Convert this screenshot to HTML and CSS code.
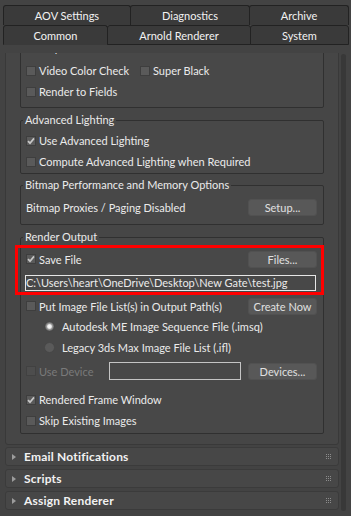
FILE: index.html
```html
<!DOCTYPE html>
<html lang="en">
<head>
    <meta charset="UTF-8">
    <title>Render Setup - Common</title>
    <link rel="stylesheet" href="styles.css">
</head>
<body>
    <div class="tabs">
        <div class="tab-row back">
            <div class="tab tab-aov">AOV Settings</div>
            <div class="tab tab-diag">Diagnostics</div>
            <div class="tab tab-archive">Archive</div>
        </div>
        <div class="tab-row front">
            <div class="tab tab-common active">Common</div>
            <div class="tab tab-arnold">Arnold Renderer</div>
            <div class="tab tab-system">System</div>
        </div>
    </div>

    <div class="main">
        <div class="viewport">
            <div class="rollout scrolled">
                <fieldset class="group group-options">
                    <legend>Options</legend>
                    <div class="row row-top">
                        <label class="check col"><span class="box"></span>Displacement</label>
                        <label class="check"><span class="box"></span>Force 2-Sided</label>
                    </div>
                    <div class="row">
                        <label class="check col"><span class="box"></span>Video Color Check</label>
                        <label class="check"><span class="box"></span>Super Black</label>
                    </div>
                    <div class="row">
                        <label class="check"><span class="box"></span>Render to Fields</label>
                    </div>
                </fieldset>

                <fieldset class="group group-lighting">
                    <legend>Advanced Lighting</legend>
                    <div class="row">
                        <label class="check"><span class="box checked"><svg viewBox="0 0 8 8"><path d="M1 4.2 3 6.2 7 1.4"/></svg></span>Use Advanced Lighting</label>
                    </div>
                    <div class="row">
                        <label class="check"><span class="box"></span>Compute Advanced Lighting when Required</label>
                    </div>
                </fieldset>

                <fieldset class="group group-bitmap">
                    <legend>Bitmap Performance and Memory Options</legend>
                    <div class="row row-button">
                        <span class="plain">Bitmap Proxies / Paging Disabled</span>
                        <div class="btn">Setup...</div>
                    </div>
                </fieldset>

                <fieldset class="group group-output">
                    <legend>Render Output</legend>
                    <div class="save-block">
                        <div class="row row-save">
                            <label class="check"><span class="box checked"><svg viewBox="0 0 8 8"><path d="M1 4.2 3 6.2 7 1.4"/></svg></span>Save File</label>
                            <div class="btn">Files...</div>
                        </div>
                        <div class="path-field">C:\Users\heart\OneDrive\Desktop\New Gate\test.jpg</div>
                        <div class="annotation"></div>
                    </div>
                    <div class="row row-put">
                        <label class="check"><span class="box"></span>Put Image File List(s) in Output Path(s)</label>
                        <div class="btn">Create Now</div>
                    </div>
                    <div class="row radio-row">
                        <span class="radio on"></span>Autodesk ME Image Sequence File (.imsq)
                    </div>
                    <div class="row radio-row">
                        <span class="radio"></span>Legacy 3ds Max Image File List (.ifl)
                    </div>
                    <div class="row row-device">
                        <label class="check disabled device-label"><span class="box"></span>Use Device</label>
                        <div class="device-field"></div>
                        <div class="btn">Devices...</div>
                    </div>
                    <div class="row row-frame">
                        <label class="check"><span class="box checked"><svg viewBox="0 0 8 8"><path d="M1 4.2 3 6.2 7 1.4"/></svg></span>Rendered Frame Window</label>
                    </div>
                    <div class="row">
                        <label class="check"><span class="box"></span>Skip Existing Images</label>
                    </div>
                </fieldset>
            </div>

            <div class="rollout-head">
                <span class="arrow"></span>Email Notifications
                <svg class="grip" viewBox="0 0 5 5"><rect x="0" y="0" width="1" height="1"/><rect x="2" y="0" width="1" height="1"/><rect x="4" y="0" width="1" height="1"/><rect x="0" y="2" width="1" height="1"/><rect x="2" y="2" width="1" height="1"/><rect x="4" y="2" width="1" height="1"/><rect x="0" y="4" width="1" height="1"/><rect x="2" y="4" width="1" height="1"/><rect x="4" y="4" width="1" height="1"/></svg>
            </div>
            <div class="rollout-head">
                <span class="arrow"></span>Scripts
                <svg class="grip" viewBox="0 0 5 5"><rect x="0" y="0" width="1" height="1"/><rect x="2" y="0" width="1" height="1"/><rect x="4" y="0" width="1" height="1"/><rect x="0" y="2" width="1" height="1"/><rect x="2" y="2" width="1" height="1"/><rect x="4" y="2" width="1" height="1"/><rect x="0" y="4" width="1" height="1"/><rect x="2" y="4" width="1" height="1"/><rect x="4" y="4" width="1" height="1"/></svg>
            </div>
            <div class="rollout-head">
                <span class="arrow"></span>Assign Renderer
                <svg class="grip" viewBox="0 0 5 5"><rect x="0" y="0" width="1" height="1"/><rect x="2" y="0" width="1" height="1"/><rect x="4" y="0" width="1" height="1"/><rect x="0" y="2" width="1" height="1"/><rect x="2" y="2" width="1" height="1"/><rect x="4" y="2" width="1" height="1"/><rect x="0" y="4" width="1" height="1"/><rect x="2" y="4" width="1" height="1"/><rect x="4" y="4" width="1" height="1"/></svg>
            </div>
        </div>
        <div class="scrollbar"></div>
    </div>
</body>
</html>
```

FILE: styles.css
```css
* {
    box-sizing: border-box;
}
body {
    margin: 0;
    width: 351px;
    height: 516px;
    overflow: hidden;
    background-color: #434343;
    font-family: Lato, "Liberation Sans", sans-serif;
    font-size: 11px;
    color: #ebebeb;
}

/* tabs */
.tabs {
    height: 45px;
    padding: 5px 0 0 3px;
}
.tab-row {
    display: flex;
    height: 20px;
}
.tab {
    height: 20px;
    display: flex;
    align-items: center;
    justify-content: center;
    background-color: #3a3a3a;
    border: 1px solid #222;
    border-radius: 3px 3px 0 0;
    margin-right: -1px;
    color: #f2f2f2;
}
.back .tab {
    border-bottom: none;
}
.tab.active {
    border-bottom-color: transparent;
}
.tab-aov { width: 128px; }
.tab-diag { width: 120px; }
.tab-archive { width: 100px; }
.tab-common { width: 105px; }
.tab-arnold { width: 144px; }
.tab-system { width: 99px; }

/* scroll area */
.main {
    display: flex;
    margin-top: 8px;
    height: 463px;
}
.viewport {
    width: 339px;
    height: 463px;
    padding-left: 5px;
    overflow: hidden;
}
.scrollbar {
    width: 5px;
    height: 457px;
    margin: 1px 0 0 2px;
    background-color: #383838;
    border-radius: 3px;
}
.rollout {
    width: 334px;
    background-color: #464646;
    border: 1px solid #393939;
    border-radius: 3px;
    padding: 6px 14px 10px;
}
.scrolled {
    margin-top: -38px;
}

/* group boxes */
.group {
    margin: 0;
    min-width: 0;
    padding: 3px 6px 0 5px;
    border: 1px solid #303030;
    border-radius: 2px;
    background-color: #484848;
}
.group legend {
    margin-left: -3px;
    padding: 0 2px;
    line-height: 14px;
}
.group-options { padding-bottom: 5px; }
.group-lighting { margin-top: 5px; padding-bottom: 1px; }
.group-bitmap { margin-top: 4px; padding-bottom: 7px; }
.group-output { margin-top: 5px; padding-bottom: 2px; }

.row {
    display: flex;
    align-items: center;
    height: 21px;
    white-space: nowrap;
}
.row-top {
    align-items: flex-start;
    padding-top: 2px;
}
.check {
    display: flex;
    align-items: center;
    gap: 3px;
}
.col {
    width: 114px;
}
.box {
    flex: none;
    width: 10px;
    height: 10px;
    display: flex;
    align-items: center;
    justify-content: center;
    background-color: #5a5a5a;
    border: 1px solid #3e3e3e;
}
.box svg {
    width: 8px;
    height: 8px;
}
.box path {
    fill: none;
    stroke: #c8c8c8;
    stroke-width: 1.7;
}
.check.disabled {
    color: #7a7a7a;
}
.check.disabled .box {
    background-color: #4d4d4d;
    border-color: #414141;
}

.btn {
    margin-left: auto;
    flex: none;
    width: 69px;
    height: 17px;
    display: flex;
    align-items: center;
    justify-content: center;
    background-color: #585858;
    border: 1px solid #515151;
    border-radius: 3px;
    color: #e0e0e0;
}
.row-button {
    height: 19px;
    margin-top: 3px;
}

/* render output */
.save-block {
    position: relative;
    margin-top: 2px;
}
.row-save {
    height: 20px;
}
.path-field {
    height: 16px;
    margin: 6px 1px 0 -1px;
    border: 1px solid #e6e6e6;
    line-height: 14px;
    white-space: nowrap;
    overflow: hidden;
}
.annotation {
    position: absolute;
    top: -4px;
    left: -11px;
    right: -7px;
    bottom: -4px;
    border: 3px solid #ff0000;
}
.row-put {
    height: 20px;
    margin-top: 5px;
}
.radio-row {
    padding-left: 18px;
    gap: 7px;
}
.radio {
    flex: none;
    width: 11px;
    height: 11px;
    border-radius: 50%;
    background-color: #5a5a5a;
    border: 1px solid #474747;
}
.radio.on {
    background: radial-gradient(circle, #fafafa 0, #f0f0f0 1.8px, #a0a0a0 2.8px, #5e5e5e 4.5px);
}
.row-device {
    height: 20px;
    margin-top: 3px;
}
.device-label {
    width: 83px;
}
.device-field {
    width: 132px;
    height: 18px;
    border: 1px solid #c4c4c4;
}
.row-frame {
    margin-top: 8px;
}

/* collapsed rollouts */
.rollout-head {
    width: 334px;
    height: 19px;
    margin-top: 3px;
    display: flex;
    align-items: center;
    padding: 0 7px 0 6px;
    background-color: #474747;
    border: 1px solid #3b3b3b;
    border-radius: 3px;
    font-size: 12px;
    font-weight: bold;
    letter-spacing: 0.2px;
    color: #f2f2f2;
}
.rollout + .rollout-head {
    margin-top: 2px;
}
.arrow {
    width: 0;
    height: 0;
    margin-right: 8px;
    border-left: 4px solid #9c9c9c;
    border-top: 3px solid transparent;
    border-bottom: 3px solid transparent;
}
.grip {
    margin-left: auto;
    width: 5px;
    height: 5px;
    fill: #8c8c8c;
}
```
